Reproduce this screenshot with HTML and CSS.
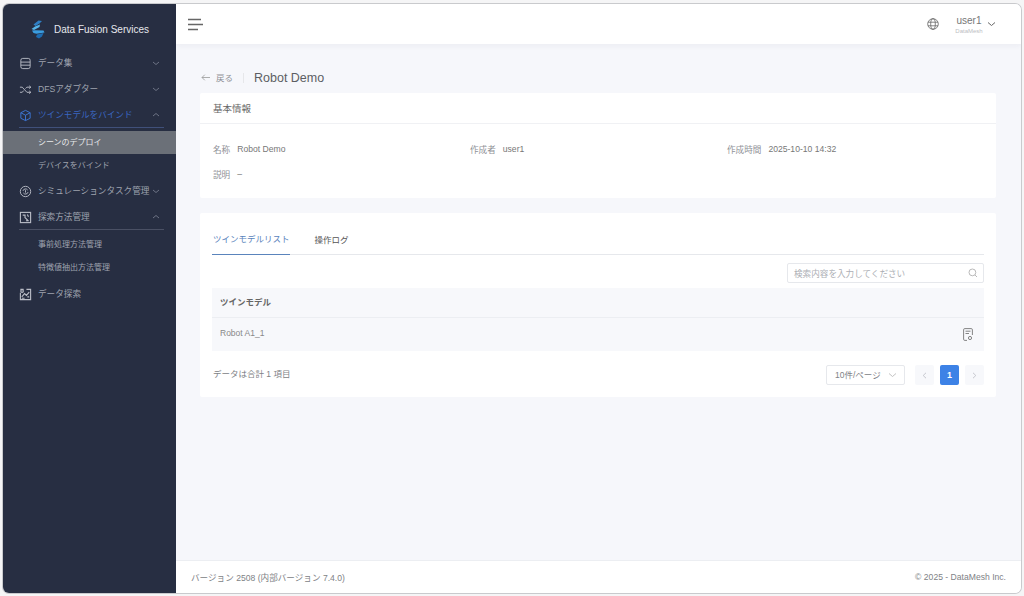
FILE: index.html
```html
<!DOCTYPE html>
<html lang="ja">
<head>
<meta charset="utf-8">
<title>Robot Demo</title>
<link rel="stylesheet" href="styles.css">
</head>
<body>
<div class="app">
  <aside class="sidebar">
    <div class="brand">
      <svg class="logo" width="15" height="19" viewBox="0 0 15 19">
        <path d="M8.5 0.5L12 1L9.5 3.5L5.5 6L3.5 4.5Z" fill="#2f7fc4"/>
        <path d="M5 6.5L10 4.5L9.5 7L4 10L1.5 9Z" fill="#55b4ea"/>
        <path d="M2 10.5L5 10.2L13.5 10.5L14.5 12.5L6.5 13.8L3.5 13Z" fill="#3a9de0"/>
        <path d="M7 14.5L13.5 13L12 16.5L9 18.5L6 17Z" fill="#1d6cb2"/>
      </svg>
      <span class="brand-name">Data Fusion Services</span>
    </div>
    <nav class="menu">
      <div class="item">
        <svg class="ic" viewBox="0 0 14 14"><rect x="2" y="1.5" width="10" height="11" rx="2"/><path d="M2 5.5H12M2 8.8H12"/></svg>
        <span class="label">データ集</span>
        <svg class="chev" viewBox="0 0 8 8"><path d="M1 3L4 5.5L7 3"/></svg>
      </div>
      <div class="item">
        <svg class="ic" viewBox="0 0 14 14"><path d="M1 4.5H3.5L8.5 10H12.5M1 10H3.5L5 8.2M7 6L8.5 4.5H12.5M11 3L12.8 4.5L11 6M11 8.5L12.8 10L11 11.5"/></svg>
        <span class="label">DFSアダプター</span>
        <svg class="chev" viewBox="0 0 8 8"><path d="M1 3L4 5.5L7 3"/></svg>
      </div>
      <div class="item active open">
        <svg class="ic" viewBox="0 0 14 14"><path d="M7 1.5L12 4V10L7 12.5L2 10V4ZM2 4L7 6.7L12 4M7 6.7V12.5"/></svg>
        <span class="label">ツインモデルをバインド</span>
        <svg class="chev" viewBox="0 0 8 8"><path d="M1 5L4 2.5L7 5"/></svg>
      </div>
      <div class="sub selected first">シーンのデプロイ</div>
      <div class="sub end-a">デバイスをバインド</div>
      <div class="item">
        <svg class="ic" viewBox="0 0 14 14"><circle cx="7" cy="7" r="5.6"/><path d="M4.3 6.3A2.8 2.8 0 0 1 9.3 5.4M9.7 7.7A2.8 2.8 0 0 1 4.7 8.6"/><path d="M7 5.6V8.2"/></svg>
        <span class="label">シミュレーションタスク管理</span>
        <svg class="chev" viewBox="0 0 8 8"><path d="M1 3L4 5.5L7 3"/></svg>
      </div>
      <div class="item open">
        <svg class="ic thick" viewBox="0 0 14 14"><rect x="1.5" y="1.5" width="11" height="11"/><path d="M4 4.5H6.5V7M6 6.5L9.8 10.3M7.5 10.5H10.5M9 3.8L10.2 6.2"/></svg>
        <span class="label">探索方法管理</span>
        <svg class="chev" viewBox="0 0 8 8"><path d="M1 5L4 2.5L7 5"/></svg>
      </div>
      <div class="sub first">事前処理方法管理</div>
      <div class="sub end-b">特徴値抽出方法管理</div>
      <div class="item">
        <svg class="ic thick" viewBox="0 0 14 14"><path d="M8 1.5H12.5V12.5H1.5V5M1.5 1.5H5"/><path d="M3 9.5L6 6L8 8L11 4.5M3 11H6M9 9.5H11"/><circle cx="3.3" cy="3.3" r="1.4"/></svg>
        <span class="label">データ探索</span>
      </div>
    </nav>
  </aside>
  <div class="main">
    <header class="topbar">
      <svg class="hamburger" width="15" height="13" viewBox="0 0 15 13"><path d="M0 1.5H13M0 6.5H15M0 11.5H10"/></svg>
      <div class="top-right">
        <svg class="globe" width="12" height="12" viewBox="0 0 12 12"><circle cx="6" cy="6" r="5.3"/><ellipse cx="6" cy="6" rx="2.3" ry="5.3"/><path d="M1 4.2H11M1 7.8H11"/></svg>
        <div class="user">
          <span class="user-name">user1</span>
          <span class="user-org">DataMesh</span>
        </div>
        <svg class="user-chev" width="9" height="6" viewBox="0 0 9 6"><path d="M1 1.5L4.5 4.5L8 1.5"/></svg>
      </div>
    </header>
    <main class="content">
      <div class="crumb">
        <svg class="arrow" width="9" height="7" viewBox="0 0 9 7"><path d="M9 3.5H1M3.8 0.7L1 3.5L3.8 6.3"/></svg>
        <span class="back">戻る</span>
        <span class="sep"></span>
        <span class="title">Robot Demo</span>
      </div>
      <section class="card info">
        <h2 class="card-head">基本情報</h2>
        <div class="fields">
          <div class="field"><span class="key">名称</span><span>Robot Demo</span></div>
          <div class="field"><span class="key">作成者</span><span>user1</span></div>
          <div class="field"><span class="key">作成時間</span><span>2025-10-10 14:32</span></div>
          <div class="field"><span class="key">説明</span><span>–</span></div>
        </div>
      </section>
      <section class="card list">
        <div class="tabs">
          <span class="tab current">ツインモデルリスト</span>
          <span class="tab">操作ログ</span>
        </div>
        <div class="search-row">
          <div class="search">
            <span>検索内容を入力してください</span>
            <svg width="10" height="10" viewBox="0 0 10 10"><circle cx="4.4" cy="4.4" r="3.4"/><path d="M7 7L9 9"/></svg>
          </div>
        </div>
        <div class="table">
          <div class="thead">ツインモデル</div>
          <div class="trow">
            <span>Robot A1_1</span>
            <svg width="10" height="13" viewBox="0 0 10 13"><path d="M4 12.4H1.8A1.2 1.2 0 0 1 0.6 11.2V1.8A1.2 1.2 0 0 1 1.8 0.6H8.2A1.2 1.2 0 0 1 9.4 1.8V7"/><path d="M2.5 3.2H7.5M2.5 5.5H6"/><circle cx="7" cy="10" r="1.6"/></svg>
          </div>
        </div>
        <div class="table-foot">
          <span class="total">データは合計 1 項目</span>
          <div class="pager">
            <div class="size"><span>10件/ページ</span><svg width="9" height="6" viewBox="0 0 9 6"><path d="M1 1.5L4.5 4.5L8 1.5"/></svg></div>
            <span class="page nav"><svg width="5" height="7" viewBox="0 0 5 7"><path d="M4 0.8L1.2 3.5L4 6.2"/></svg></span>
            <span class="page on">1</span>
            <span class="page nav"><svg width="5" height="7" viewBox="0 0 5 7"><path d="M1 0.8L3.8 3.5L1 6.2"/></svg></span>
          </div>
        </div>
      </section>
    </main>
    <footer class="footer">
      <span>バージョン 2508 (内部バージョン 7.4.0)</span>
      <span>© 2025 - DataMesh Inc.</span>
    </footer>
  </div>
</div>
</body>
</html>
```
FILE: styles.css
```css
* { box-sizing: border-box; }
html, body { height: 100%; margin: 0; }
body {
  background: #f5f5f6;
  padding: 4px 3px 3px 3px;
  font-family: "Liberation Sans", "Noto Sans CJK JP", sans-serif;
  overflow: hidden;
}
.app {
  display: flex;
  height: 100%;
  border-radius: 6px;
  overflow: hidden;
  background: #f6f7fb;
  box-shadow: 0 0 0 1px #c9cacd;
}
.sidebar {
  width: 173px;
  flex: none;
  background: #272e42;
  color: #9fa3af;
  font-size: 8.6px;
}
.brand {
  height: 46px;
  padding: 4px 0 0 27px;
  display: flex;
  align-items: center;
  gap: 9px;
}
.brand-name { color: #e6e8ec; font-size: 10px; }
.menu { display: flex; flex-direction: column; }
.item {
  height: 26px;
  display: flex;
  align-items: center;
  padding: 0 16px;
  position: relative;
}
.ic {
  width: 13px;
  height: 13px;
  fill: none;
  stroke: #b9bcc6;
  stroke-width: 1;
  flex: none;
  margin-right: 6px;
}
.thick { stroke-width: 1.2; }
.label { flex: 1; white-space: nowrap; padding-bottom: 2px; }
.chev {
  width: 8px;
  height: 8px;
  fill: none;
  stroke: #6d7385;
  stroke-width: 1;
  flex: none;
}
.open::after {
  content: "";
  position: absolute;
  left: 16px;
  right: 12px;
  bottom: 0;
  height: 1px;
  background: #4a5064;
}
.active { color: #3a66c0; }
.active .ic { stroke: #3e78d8; }
.active.open::after { background: #40507a; }
.sub {
  height: 23px;
  display: flex;
  align-items: center;
  padding: 0 0 2px 35px;
  font-size: 8px;
}
.first { margin-top: 3px; }
.end-a { margin-bottom: 1px; }
.end-b { margin-bottom: 2px; }
.selected {
  background: #6b7078;
  color: #e8e9ea;
}
.main {
  flex: 1;
  min-width: 0;
  display: flex;
  flex-direction: column;
}
.topbar {
  height: 40px;
  flex: none;
  background: #fff;
  display: flex;
  align-items: center;
  justify-content: space-between;
  padding: 0 25px 0 12px;
  box-shadow: 0 2px 6px rgba(30, 40, 70, 0.05);
}
.hamburger { fill: none; stroke: #666; stroke-width: 1.5; }
.top-right { display: flex; align-items: center; }
.globe { fill: none; stroke: #666; stroke-width: 0.8; margin-right: 12px; }
.user { display: flex; flex-direction: column; align-items: center; width: 36px; padding-top: 2px; }
.user-name { font-size: 10px; color: #777; line-height: 13px; }
.user-org { font-size: 6px; color: #bcbec3; line-height: 9px; }
.user-chev { fill: none; stroke: #666; stroke-width: 1; }
.content {
  flex: 1;
  min-height: 0;
  padding: 0 25px 0 24px;
  display: flex;
  flex-direction: column;
}
.crumb {
  height: 49px;
  padding: 18px 0 0 1px;
  display: flex;
  align-items: center;
  flex: none;
}
.arrow { fill: none; stroke: #999; stroke-width: 0.8; margin-right: 6px; }
.back { font-size: 8.5px; color: #8f9197; padding-bottom: 2px; }
.sep { width: 1px; height: 10px; background: #e6e7ea; margin: 0 10px; }
.title { font-size: 12.5px; color: #5c5e63; }
.card { background: #fff; border-radius: 2px; flex: none; }
.info { height: 105px; }
.card-head {
  margin: 0;
  height: 31px;
  padding-left: 13px;
  display: flex;
  align-items: center;
  font-size: 9.5px;
  font-weight: 400;
  color: #666;
  border-bottom: 1px solid #f0f1f4;
}
.fields {
  display: grid;
  grid-template-columns: 257px 257px 1fr;
  grid-auto-rows: 25px;
  padding: 12px 13px 0;
  font-size: 8.6px;
  color: #777;
}
.field { display: flex; align-items: center; gap: 7px; }
.key { color: #8f9197; }
.list { margin-top: 15px; height: 184px; padding: 12px 12px 0; }
.tabs {
  display: flex;
  gap: 25px;
  height: 30px;
  padding-left: 1px;
  border-bottom: 1px solid #e6e8ec;
  font-size: 8.5px;
  color: #555;
}
.tab { height: 30px; display: flex; align-items: center; padding-bottom: 3px; }
.current { color: #5a84bc; border-bottom: 1.5px solid #5a84bc; margin-left: -1px; padding-left: 1px; }
.search-row { display: flex; justify-content: flex-end; margin-top: 8px; }
.search {
  width: 197px;
  height: 20px;
  border: 1px solid #e6e8ec;
  border-radius: 2px;
  display: flex;
  align-items: center;
  justify-content: space-between;
  padding: 0 5px 0 6px;
  font-size: 8.6px;
  color: #adafb5;
}
.search svg { fill: none; stroke: #a8a8a8; stroke-width: 0.8; }
.table { margin-top: 5px; background: #f7f8fb; font-size: 8.5px; }
.thead {
  height: 30px;
  display: flex;
  align-items: center;
  padding: 0 0 4px 8px;
  color: #666;
  font-weight: 700;
  border-bottom: 1px solid #eceef2;
}
.trow {
  height: 33px;
  display: flex;
  align-items: center;
  justify-content: space-between;
  padding: 0 11px 0 8px;
  color: #888;
}
.trow span { padding-bottom: 4px; }
.trow svg { fill: none; stroke: #777; stroke-width: 0.9; }
.table-foot {
  display: flex;
  justify-content: space-between;
  align-items: center;
  margin-top: 14px;
  padding-left: 1px;
  font-size: 8.5px;
  color: #808286;
}
.total { padding-bottom: 4px; }
.pager { display: flex; align-items: center; gap: 6px; }
.size {
  width: 79px;
  height: 20px;
  border: 1px solid #e6e8ec;
  border-radius: 2px;
  display: flex;
  align-items: center;
  justify-content: space-between;
  padding: 0 7px 0 8px;
  margin-right: 4px;
}
.size span { padding-bottom: 2px; }
.size svg { fill: none; stroke: #b4b4b4; stroke-width: 0.8; }
.page {
  width: 19px;
  height: 20px;
  display: flex;
  align-items: center;
  justify-content: center;
  border-radius: 2px;
  font-size: 9px;
}
.nav { background: #f7f8fb; }
.nav svg { fill: none; stroke: #c0c2c8; stroke-width: 0.9; }
.on { background: #3d82e6; color: #fff; font-weight: 700; }
.footer {
  height: 33px;
  flex: none;
  background: #fff;
  border-top: 1px solid #eceef2;
  display: flex;
  align-items: center;
  justify-content: space-between;
  padding: 0 15px;
  font-size: 8.6px;
  color: #808286;
}
```
